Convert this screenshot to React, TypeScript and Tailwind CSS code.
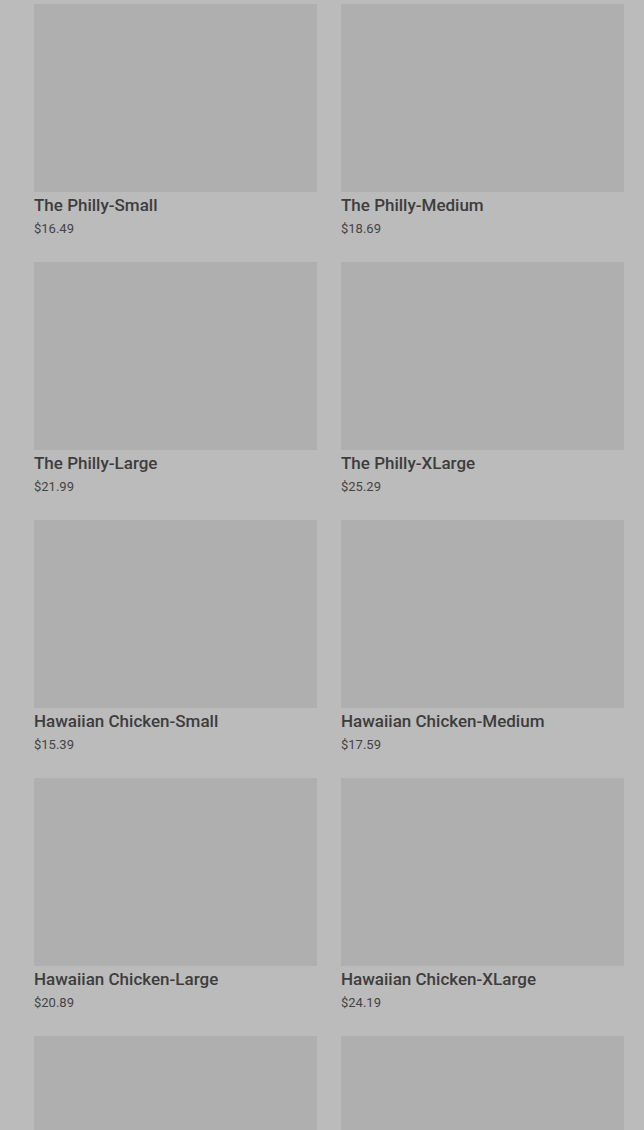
import React from 'react';

const products = [
  { name: 'The Philly-Small', price: '$16.49' },
  { name: 'The Philly-Medium', price: '$18.69' },
  { name: 'The Philly-Large', price: '$21.99' },
  { name: 'The Philly-XLarge', price: '$25.29' },
  { name: 'Hawaiian Chicken-Small', price: '$15.39' },
  { name: 'Hawaiian Chicken-Medium', price: '$17.59' },
  { name: 'Hawaiian Chicken-Large', price: '$20.89' },
  { name: 'Hawaiian Chicken-XLarge', price: '$24.19' },
];

function ProductCard({ name, price }: { name?: string; price?: string }) {
  return (
    <div className="flex flex-col">
      <div className="h-[188px] w-full bg-[#afafaf]"></div>
      {name && (
        <>
          <p className="mt-[2px] text-[17px] font-medium leading-[22px] text-[#3d3d3d]">{name}</p>
          <p className="mt-[3px] text-[13px] leading-[20px] text-[#444444]">{price}</p>
        </>
      )}
    </div>
  );
}

export default function App() {
  return (
    <div className="h-[1130px] overflow-hidden bg-[#bbbbbb] font-['Roboto',sans-serif]">
      <div className="grid grid-cols-2 gap-x-6 gap-y-[23px] pl-[34px] pr-5 pt-1">
        {products.map((p, i) => (
          <ProductCard key={i} name={p.name} price={p.price} />
        ))}
        <ProductCard />
        <ProductCard />
      </div>
    </div>
  );
}
